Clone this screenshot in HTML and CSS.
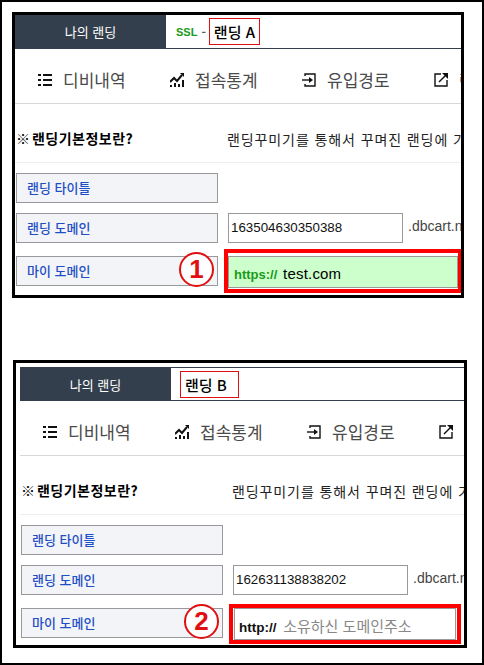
FILE: index.html
```html
<!DOCTYPE html>
<html lang="ko">

<head>
  <meta charset="UTF-8">
  <meta name="viewport" content="width=device-width, initial-scale=1.0">
  <title>랜딩 기본정보</title>
  <link rel="stylesheet" href="styles.css">
</head>

<body>
  <div class="shot shot-a">
    <div class="top-bar">
      <div class="my-landing">나의 랜딩</div>
      <div class="landing-name">
        <span class="ssl">SSL</span> <span class="ssl-dash">-</span>
        <span class="name-box">랜딩 A</span>
      </div>
    </div>

    <div class="tabs">
      <div class="tab">
        <svg class="icon" viewBox="0 0 14 14"><path d="M0 1h3v2H0zM5 1h9v2H5zM0 6h3v2H0zM5 6h9v2H5zM0 11h3v2H0zM5 11h9v2H5z"/></svg>
        디비내역
      </div>
      <div class="tab">
        <svg class="icon" viewBox="0 0 14 14"><path d="M0 12h2v2H0zM4 10h2v4H4zM8 11h2v3H8zM12 7h2v7h-2z"/><path class="line" d="M0 9l4-4 3 3 5-6"/><path d="M10 0h4v4z"/></svg>
        접속통계
      </div>
      <div class="tab">
        <svg class="icon" viewBox="0 0 14 14"><path class="line thin" d="M3 3V1h10v12H3v-2"/><path class="line thin" d="M0 7h8"/><path d="M7 4l4 3-4 3z"/></svg>
        유입경로
      </div>
      <div class="tab">
        <svg class="icon" viewBox="0 0 14 14"><path class="line thin" d="M7 1H1v12h12V7"/><path class="line thin" d="M5 9l7-7"/><path d="M8 0h6v6z"/></svg>
        <span class="tab-cut">랜딩</span>
      </div>
    </div>

    <div class="info">
      <b class="info-title">※ 랜딩기본정보란?</b>
      <span class="info-text">랜딩꾸미기를 통해서 꾸며진 랜딩에 기</span>
    </div>

    <div class="rows">
      <div class="row">
        <div class="label">랜딩 타이틀</div>
      </div>
      <div class="row">
        <div class="label">랜딩 도메인</div>
        <div class="field">163504630350388</div>
        <div class="suffix">.dbcart.n</div>
      </div>
      <div class="row row-my">
        <div class="label">마이 도메인</div>
        <span class="num">1</span>
        <div class="red-box">
          <div class="field field-my"><b class="scheme">https://</b> <span class="domain">test.com</span></div>
        </div>
      </div>
    </div>
  </div>

  <div class="shot shot-b">
    <div class="top-bar">
      <div class="my-landing">나의 랜딩</div>
      <div class="landing-name">
        <span class="name-box">랜딩 B</span>
      </div>
    </div>

    <div class="tabs">
      <div class="tab">
        <svg class="icon" viewBox="0 0 14 14"><path d="M0 1h3v2H0zM5 1h9v2H5zM0 6h3v2H0zM5 6h9v2H5zM0 11h3v2H0zM5 11h9v2H5z"/></svg>
        디비내역
      </div>
      <div class="tab">
        <svg class="icon" viewBox="0 0 14 14"><path d="M0 12h2v2H0zM4 10h2v4H4zM8 11h2v3H8zM12 7h2v7h-2z"/><path class="line" d="M0 9l4-4 3 3 5-6"/><path d="M10 0h4v4z"/></svg>
        접속통계
      </div>
      <div class="tab">
        <svg class="icon" viewBox="0 0 14 14"><path class="line thin" d="M3 3V1h10v12H3v-2"/><path class="line thin" d="M0 7h8"/><path d="M7 4l4 3-4 3z"/></svg>
        유입경로
      </div>
      <div class="tab">
        <svg class="icon" viewBox="0 0 14 14"><path class="line thin" d="M7 1H1v12h12V7"/><path class="line thin" d="M5 9l7-7"/><path d="M8 0h6v6z"/></svg>
      </div>
    </div>

    <div class="info">
      <b class="info-title">※ 랜딩기본정보란?</b>
      <span class="info-text">랜딩꾸미기를 통해서 꾸며진 랜딩에 기</span>
    </div>

    <div class="rows">
      <div class="row">
        <div class="label">랜딩 타이틀</div>
      </div>
      <div class="row">
        <div class="label">랜딩 도메인</div>
        <div class="field">162631138838202</div>
        <div class="suffix">.dbcart.n</div>
      </div>
      <div class="row row-my">
        <div class="label">마이 도메인</div>
        <span class="num">2</span>
        <div class="red-box">
          <div class="field field-my"><b class="scheme">http://</b> <span class="hint">소유하신 도메인주소</span></div>
        </div>
        <div class="suffix">부</div>
      </div>
    </div>
  </div>
</body>

</html>
```

FILE: styles.css
```css
html,
body {
  height: 100%;
}

body {
  margin: 0;
  height: 665px;
  box-sizing: border-box;
  overflow: hidden;
  border: 2px solid #000;
  background: #fff;
  font-family: "Noto Sans CJK KR", "Liberation Sans", sans-serif;
  color: #111;
}

/* one captured screen */
.shot {
  box-sizing: border-box;
  overflow: hidden;
  border: 3px solid #000;
  background: #fff;
}

.shot-a {
  width: 452px;
  height: 286px;
  margin: 10px 0 0 10px;
}

.shot-b {
  width: 454px;
  height: 288px;
  margin: 62px 0 0 11px;
  padding: 4px 0 0 4px;
}

/* top bar */
.top-bar {
  display: flex;
  width: 480px;
  height: 34px;
  box-sizing: border-box;
  border-bottom: 1px solid #343f4d;
}

.shot-b .top-bar {
  border-top: 1px solid #343f4d;
}

.my-landing {
  width: 151px;
  background: #343f4d;
  color: #fff;
  font-size: 13px;
  line-height: 33px;
  text-align: center;
}

.landing-name {
  display: flex;
  align-items: center;
  gap: 4px;
  padding-left: 10px;
  font-size: 12px;
}

.shot-b .landing-name {
  padding-left: 9px;
}

.ssl {
  color: #1a9a1a;
  font-family: "Liberation Sans", sans-serif;
  font-size: 11px;
  font-weight: bold;
}

.ssl-dash {
  color: #555;
  font-weight: bold;
}

.name-box {
  box-sizing: border-box;
  height: 27px;
  margin-left: -1px;
  padding: 0 4px;
  border: 1px solid #e01010;
  color: #000;
  font-size: 15px;
  font-weight: 500;
  line-height: 25px;
  white-space: nowrap;
}

.shot-b .name-box {
  width: 59px;
  margin-left: 0;
}

/* tabs */
.tabs {
  display: flex;
  width: 600px;
  height: 55px;
  box-sizing: border-box;
  padding: 7px 0 0 23px;
  border-bottom: 1px solid #d8d8d8;
}

.tab {
  display: flex;
  align-items: center;
  gap: 11px;
  width: 132px;
  flex: none;
  color: #4a4a4a;
  font-size: 17px;
  white-space: nowrap;
}

.tab-cut {
  color: #a33;
}

.icon {
  width: 14px;
  height: 14px;
  flex: none;
  fill: #111;
}

.icon .line {
  fill: none;
  stroke: #111;
  stroke-width: 2;
}

.icon .line.thin {
  stroke-width: 1.4;
}

/* info line */
.info {
  display: flex;
  align-items: center;
  height: 59px;
  width: 600px;
  box-sizing: border-box;
  padding: 9px 0 0 1px;
  border-bottom: 1px solid #eee;
  font-size: 14px;
}

.info-title {
  width: 211px;
  flex: none;
  color: #000;
  letter-spacing: .5px;
  word-spacing: -3px;
  white-space: nowrap;
}

.info-text {
  margin-top: 2px;
  color: #222;
  letter-spacing: .9px;
  white-space: nowrap;
}

/* form rows */
.rows {
  display: flex;
  flex-direction: column;
  gap: 10px;
  width: 600px;
  padding: 10px 0 0 1px;
}

.row {
  position: relative;
  display: flex;
  gap: 10px;
}

.label {
  box-sizing: border-box;
  width: 202px;
  height: 30px;
  flex: none;
  padding-left: 10px;
  border: 1px solid #999;
  background: #f3f4f8;
  color: #1f4fc4;
  font-size: 13px;
  font-weight: 500;
  line-height: 28px;
}

.field {
  box-sizing: border-box;
  width: 175px;
  height: 30px;
  flex: none;
  padding-left: 2px;
  border: 1px solid #999;
  color: #111;
  font-family: "Liberation Sans", sans-serif;
  font-size: 13.33px;
  line-height: 28px;
}

.suffix {
  margin-left: -5px;
  color: #444;
  font-family: "Liberation Sans", sans-serif;
  font-size: 14px;
  line-height: 26px;
  white-space: nowrap;
}

.row-my {
  gap: 6px;
  margin-top: -4px;
}

.row-my .label {
  margin-top: 7px;
}

.row-my .suffix {
  margin-left: -4px;
}

.shot-b .row-my {
  margin-top: -1px;
}

.shot-b .row-my .label {
  margin-top: 4px;
}

.red-box {
  box-sizing: border-box;
  width: 237px;
  height: 44px;
  flex: none;
  padding-top: 3px;
  border: 4px solid #f00;
  border-right-width: 3px;
}

.shot-b .red-box {
  width: 232px;
  height: 40px;
  padding: 0 1px;
  border-right-width: 4px;
}

.field-my {
  width: 100%;
  height: 32px;
  padding-left: 5px;
  background: #ccffcc;
  line-height: 33px;
}

.shot-b .field-my {
  padding-left: 4px;
  background: #fff;
}

.scheme {
  color: #1a9a1a;
  font-size: 13px;
}

.shot-b .scheme {
  color: #111;
  font-size: 13.5px;
}

.domain {
  margin-left: 2px;
  color: #000;
  font-size: 15px;
  letter-spacing: .2px;
}

.hint {
  margin-left: 3px;
  color: #888;
  font-family: "Noto Sans CJK KR", sans-serif;
  font-size: 15px;
}

/* red number over the row */
.num {
  position: absolute;
  left: 163px;
  top: 3px;
  box-sizing: border-box;
  width: 35px;
  height: 35px;
  border: 2px solid #e01010;
  border-radius: 50%;
  background: #fff;
  color: #e01010;
  font-family: "Liberation Sans", sans-serif;
  font-size: 26px;
  font-weight: bold;
  line-height: 31px;
  text-align: center;
}

.shot-b .num {
  top: 0;
}
```
